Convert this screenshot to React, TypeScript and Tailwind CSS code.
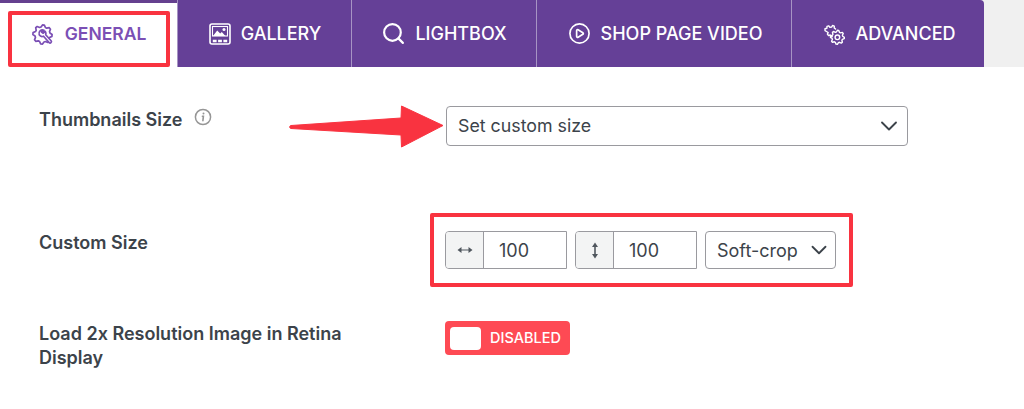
import React from "react";
import { Search, CirclePlay, ChevronDown } from "lucide-react";

const gear = (cx: number, cy: number, r1: number, r2: number, n: number) => {
  const pts: string[] = [];
  for (let i = 0; i < n * 4; i++) {
    const a = (i / (n * 4)) * Math.PI * 2;
    const r = i % 4 === 0 || i % 4 === 1 ? r2 : r1;
    pts.push(`${(cx + r * Math.cos(a)).toFixed(2)} ${(cy + r * Math.sin(a)).toFixed(2)}`);
  }
  return `M${pts.join("L")}Z`;
};

const GearWrench = () => (
  <svg width="22" height="22" viewBox="0 0 22 22" fill="none" stroke="#7b4fb5" strokeWidth="1.7" strokeLinejoin="round" strokeLinecap="round">
    <path d={gear(10.5, 10.5, 7.6, 9.6, 8)} />
    <path d="M12 6.2a3.6 3.6 0 0 0-4.8 4.6 3.6 3.6 0 0 0 4.3 1.4l5.6 6.3c1.2 1.3 3.1-.3 2-1.7l-5.4-6a3.6 3.6 0 0 0-.4-3.3L11 9.2 9.6 8z" fill="#fff" />
  </svg>
);

const GalleryIcon = () => (
  <svg width="22" height="22" viewBox="0 0 22 22" fill="none" stroke="#fff" strokeWidth="1.6">
    <rect x="1" y="1" width="20" height="20" rx="2" />
    <rect x="3.5" y="3.5" width="15" height="9.5" strokeWidth="1.1" />
    <path d="M4 13l4.2-5.5 3 3 1.6-1.6 3.6 4.1z" fill="#fff" stroke="none" />
    <circle cx="15" cy="6.6" r="1.5" fill="#fff" stroke="none" />
    <path d="M3.8 16.8h3.8v2.4H3.8zM9.1 16.8h3.8v2.4H9.1zM14.4 16.8h3.8v2.4h-3.8z" fill="#fff" stroke="none" />
  </svg>
);

const GearsIcon = () => (
  <svg width="22" height="22" viewBox="0 0 22 22" fill="none" stroke="#fff" strokeWidth="1.4" strokeLinejoin="round" strokeLinecap="round">
    <path d="M9.3 13.6H7.9l-.6-1.6-1.8.5-1.1-1.4.8-1.6-1.7-1L2 7.6V5.8l1.9-.5.1-1.9 1.8-.6 1.1 1.5 1.7-.2.9-1.6 1.8.6-.1 1.8 1.4 1.1" />
    <path d={gear(14.4, 14.3, 5.4, 7, 8)} />
    <circle cx="14.4" cy="14.3" r="2.3" />
  </svg>
);

const InfoIcon = () => (
  <svg width="18" height="18" viewBox="0 0 18 18" fill="none" stroke="#969696" strokeWidth="1.5" strokeLinecap="round" className="mt-[2px]">
    <circle cx="9" cy="9" r="7.6" />
    <path d="M8.4 8.2h1l-.5 4.4" strokeWidth="1.6" />
    <circle cx="9.5" cy="5.4" r="1" fill="#969696" stroke="none" />
  </svg>
);

const HArrow = () => (
  <svg width="16" height="8" viewBox="0 0 16 8" fill="#50575e">
    <path d="M0.5 4L4.5 1v2.4h7V1l4 3-4 3V4.6h-7V7z" />
  </svg>
);

const VArrow = () => (
  <svg width="8" height="17" viewBox="0 0 8 17" fill="#50575e">
    <path d="M4 0.5L7 5H4.8v7H7l-3 4.5L1 12h2.2V5H1z" />
  </svg>
);

const tabs = [
  { label: "GALLERY", icon: <GalleryIcon />, width: "w-[174px]", gap: "gap-[10px]", pad: "pl-[1px]" },
  { label: "LIGHTBOX", icon: <Search size={25} strokeWidth={2.1} color="#fff" />, width: "w-[185px]", gap: "gap-[9px]", pad: "pr-[0px]" },
  { label: "SHOP PAGE VIDEO", icon: <CirclePlay size={23} strokeWidth={1.75} color="#fff" />, width: "w-[255px]", gap: "gap-[10px]", pad: "pl-[2px]" },
  { label: "ADVANCED", icon: <GearsIcon />, width: "w-[193px]", gap: "gap-[10px]", pad: "pl-[3px]" },
];

export default function App() {
  return (
    <div className="relative h-[409px] w-[1024px] overflow-hidden bg-white font-['Inter',sans-serif] text-[#3c434a]">
      {/* Tabs */}
      <div className="flex h-[67px] bg-[#f0f0f0]">
        <div className="flex h-[67px] w-[177px] items-center justify-center gap-[11px] border-t-[3px] border-[#65408f] bg-white pl-[1px] pb-[1px] text-[17.5px] font-semibold text-[#7b4fb5]">
          <GearWrench />
          <span>GENERAL</span>
        </div>
        {tabs.map((t, i) => (
          <div
            key={t.label}
            className={`flex h-[67px] ${t.width} ${t.gap} ${t.pad} items-center justify-center border-l border-[#a794c4] bg-[#654097] text-[18px] font-medium text-white ${i === 3 ? "rounded-tr-[4px]" : ""}`}
          >
            {t.icon}
            <span>{t.label}</span>
          </div>
        ))}
      </div>

      {/* Red marker over the active tab */}
      <div className="absolute left-[8px] top-[11px] h-[56px] w-[162px] rounded-[2px] border-[4px] border-[#f93340]" />

      {/* Settings */}
      <div className="flex flex-col pl-[39px] text-[18px] font-semibold">
        <div className="flex h-[127px] pt-[39px]">
          <div className="flex h-[24px] w-[407px] items-start gap-[12px]">
            <span>Thumbnails Size</span>
            <InfoIcon />
          </div>
          <div className="flex h-[40px] w-[462px] items-center justify-between rounded-[4px] border border-[#9a9a9f] pl-[11px] pr-[4px] text-[17.8px] font-normal">
            <span>Set custom size</span>
            <ChevronDown size={28} strokeWidth={1.6} />
          </div>
        </div>

        <div className="mt-[19px] flex h-[74px] items-center">
          <div className="w-[391px] pb-[16px]">Custom Size</div>
          <div className="flex h-[74px] w-[423px] items-center gap-[8px] rounded-[2px] border-[4px] border-[#f93340] pl-[11px] pr-[13px] font-normal">
            {[HArrow, VArrow].map((Icon, i) => (
              <div key={i} className="flex h-[38px] w-[122px] overflow-hidden rounded-l-[4px] border border-[#9a9a9f]">
                <div className="flex w-[38px] items-center justify-center border-r border-[#9a9a9f] bg-[#f3f4f4]">
                  <Icon />
                </div>
                <div className="flex flex-1 items-center pl-[15px]">100</div>
              </div>
            ))}
            <div className="flex h-[38px] w-[131px] items-center justify-between rounded-[4px] border border-[#9a9a9f] pl-[11px] pr-[3px]">
              <span>Soft-crop</span>
              <ChevronDown size={26} strokeWidth={1.7} />
            </div>
          </div>
        </div>

        <div className="flex pt-[34px]">
          <div className="w-[406px] pt-[1px] leading-[24px]">
            Load 2x Resolution Image in Retina
            <br />
            Display
          </div>
          <div className="flex h-[34px] w-[125px] items-center gap-[9px] rounded-[4px] bg-[#fe4a54] pl-[5px]">
            <div className="h-[23px] w-[31px] rounded-[4px] bg-white" />
            <span className="text-[14.5px] font-medium text-white">DISABLED</span>
          </div>
        </div>
      </div>

      {/* Annotation arrow */}
      <svg className="absolute left-[288px] top-[104px]" width="158" height="46" viewBox="0 0 158 46">
        <path d="M3 21.5L113 14 113.5 2 155 21.5 113.5 43 113 31 3 24.5C1.2 24 1.2 22 3 21.5Z" fill="#f93340" stroke="#f93340" strokeLinejoin="round" />
      </svg>
    </div>
  );
}
